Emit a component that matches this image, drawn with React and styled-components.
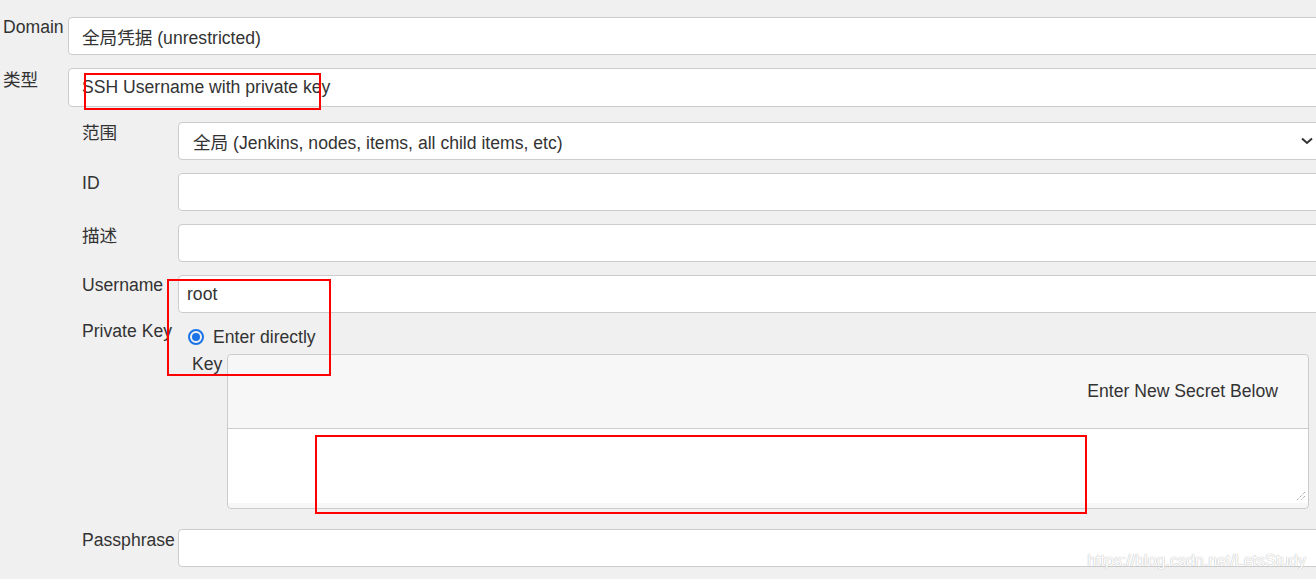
import React from 'react';
import styled, { createGlobalStyle } from 'styled-components';

const GlobalStyle = createGlobalStyle`
  html, body {
    margin: 0;
    padding: 0;
    background: #f0f0f0;
    overflow: hidden;
  }
  body {
    font-family: "Liberation Sans", Arial, "Noto Sans CJK SC", sans-serif;
    font-size: 17.6px;
    color: #333;
  }
`;

const Page = styled.div`
  position: relative;
  width: 1322px;
  height: 579px;
  padding: 17px 0 0 3px;
  box-sizing: border-box;
`;

const Row = styled.div`
  display: grid;
  grid-template-columns: ${(p) => p.labelWidth}px 1fr;
  margin-bottom: ${(p) => p.gap ?? 13}px;
`;

const Label = styled.div`
  line-height: 20px;
  padding-top: ${(p) => p.offset ?? 0}px;
  white-space: nowrap;
  color: #333;
`;

const Field = styled.div`
  height: ${(p) => p.h ?? 38}px;
  box-sizing: border-box;
  background: #fff;
  border: 1px solid #ccc;
  border-radius: 4px;
  display: flex;
  align-items: center;
  padding-left: ${(p) => p.pad ?? 13}px;
  padding-right: 14px;
  white-space: nowrap;
  position: relative;
`;

const Chevron = styled.svg`
  position: absolute;
  right: 8px;
  top: 50%;
  margin-top: -4px;
`;

const Nested = styled.div`
  grid-column: 2;
  padding-left: 14px;
  padding-top: 15px;
`;

const RadioArea = styled.div`
  padding-top: 6px;
`;

const RadioLine = styled.div`
  display: flex;
  align-items: center;
  height: 20px;
  padding-left: 10px;
  gap: 9px;
`;

const Radio = styled.span`
  width: 16px;
  height: 16px;
  border-radius: 50%;
  border: 2px solid #1a73e8;
  box-sizing: border-box;
  display: flex;
  align-items: center;
  justify-content: center;
  &::after {
    content: '';
    width: 8px;
    height: 8px;
    border-radius: 50%;
    background: #1a73e8;
  }
`;

const KeyRow = styled.div`
  display: grid;
  grid-template-columns: 35px 1fr;
  margin: 7px 13px 20px 14px;
`;

const KeyPanel = styled.div`
  border: 1px solid #ccc;
  border-radius: 4px;
  background: #f7f7f7;
  overflow: hidden;
`;

const PanelHeader = styled.div`
  height: 73px;
  display: flex;
  align-items: center;
  justify-content: flex-end;
  padding-right: 30px;
  border-bottom: 1px solid #ccc;
`;

const SecretBox = styled.div`
  height: 74px;
  background: #fff;
  margin-bottom: 5px;
  position: relative;
`;

const Grip = styled.svg`
  position: absolute;
  right: 2px;
  bottom: 2px;
`;

const Mark = styled.div`
  position: absolute;
  border: 2px solid #f00;
  box-sizing: border-box;
  pointer-events: none;
`;

const Watermark = styled.div`
  position: absolute;
  right: 16px;
  top: 552px;
  font-size: 16px;
  color: #fff;
  text-shadow: 0 0 1px #bbb, 0 0 1px #bbb;
  white-space: nowrap;
`;

export default function App() {
  return (
    <>
      <GlobalStyle />
      <Page>
        <Row labelWidth={65}>
          <Label>Domain</Label>
          <Field>全局凭据 (unrestricted)</Field>
        </Row>
        <Row labelWidth={65} gap={0}>
          <Label offset={2}>类型</Label>
          <Field h={39}>SSH Username with private key</Field>
          <Nested>
            <Row labelWidth={96}>
              <Label offset={1}>范围</Label>
              <Field pad={14}>
                全局 (Jenkins, nodes, items, all child items, etc)
                <Chevron width="12" height="8" viewBox="0 0 12 8">
                  <path d="M1 1.5 L6 6 L11 1.5" fill="none" stroke="#333" strokeWidth="2" />
                </Chevron>
              </Field>
            </Row>
            <Row labelWidth={96}>
              <Label>ID</Label>
              <Field />
            </Row>
            <Row labelWidth={96}>
              <Label offset={2}>描述</Label>
              <Field />
            </Row>
            <Row labelWidth={96} gap={8}>
              <Label>Username</Label>
              <Field pad={8}>root</Field>
            </Row>
            <Row labelWidth={96} gap={0}>
              <Label>Private Key</Label>
              <RadioArea>
                <RadioLine>
                  <Radio />
                  <span>Enter directly</span>
                </RadioLine>
                <KeyRow>
                  <Label>Key</Label>
                  <KeyPanel>
                    <PanelHeader>Enter New Secret Below</PanelHeader>
                    <SecretBox>
                      <Grip width="10" height="10" viewBox="0 0 10 10">
                        <path d="M9 1 L1 9 M9 5 L5 9" stroke="#888" strokeWidth="1" strokeDasharray="1 1" />
                      </Grip>
                    </SecretBox>
                  </KeyPanel>
                </KeyRow>
              </RadioArea>
            </Row>
            <Row labelWidth={96}>
              <Label offset={1}>Passphrase</Label>
              <Field />
            </Row>
          </Nested>
        </Row>
        <Mark style={{ left: 84, top: 73, width: 237, height: 37 }} />
        <Mark style={{ left: 167, top: 279, width: 164, height: 97 }} />
        <Mark style={{ left: 315, top: 435, width: 772, height: 79 }} />
        <Watermark>https://blog.csdn.net/LetsStudy</Watermark>
      </Page>
    </>
  );
}
